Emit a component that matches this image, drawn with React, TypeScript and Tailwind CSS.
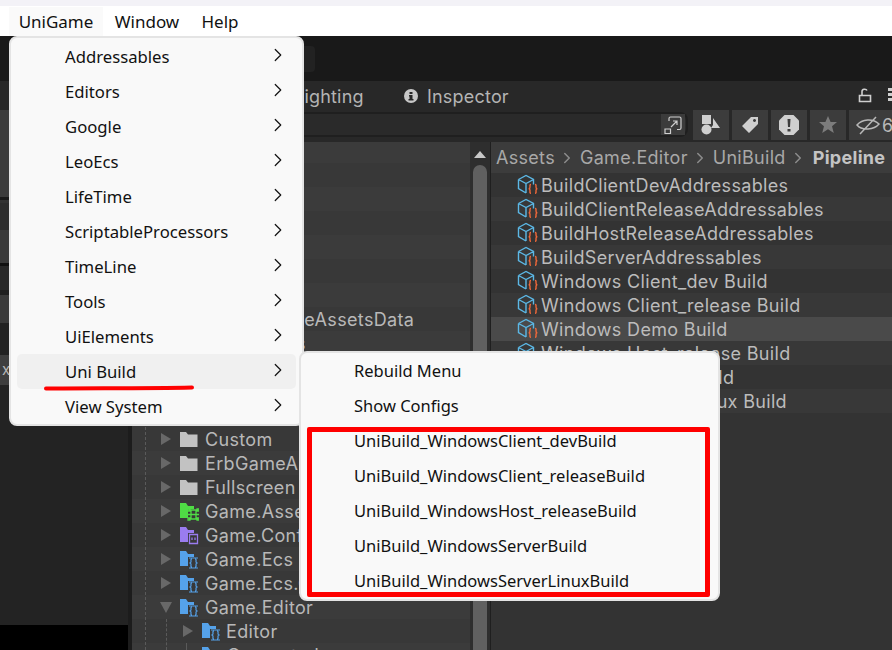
import { ChevronRight } from "lucide-react";

const treeTop = ["", "", "Animations", "", "", "", "", "AddressableAssetsData", "Assemblies", "", "", ""];

const treeRows = [
  { name: "Custom", icon: "plain" },
  { name: "ErbGameArt", icon: "plain" },
  { name: "Fullscreen", icon: "plain" },
  { name: "Game.Assets", icon: "green" },
  { name: "Game.Configuration", icon: "purple" },
  { name: "Game.Ecs", icon: "blue" },
  { name: "Game.Ecs.Client", icon: "blue" },
  { name: "Game.Editor", icon: "blue", open: true },
];

const assets = [
  "BuildClientDevAddressables",
  "BuildClientReleaseAddressables",
  "BuildHostReleaseAddressables",
  "BuildServerAddressables",
  "Windows Client_dev Build",
  "Windows Client_release Build",
  "Windows Demo Build",
  "Windows Host_release Build",
  "Windows Server Build",
  "Windows Server Linux Build",
];

const mainMenu = [
  "Addressables",
  "Editors",
  "Google",
  "LeoEcs",
  "LifeTime",
  "ScriptableProcessors",
  "TimeLine",
  "Tools",
  "UiElements",
  "Uni Build",
  "View System",
];

const subMenu = [
  "Rebuild Menu",
  "Show Configs",
  "UniBuild_WindowsClient_devBuild",
  "UniBuild_WindowsClient_releaseBuild",
  "UniBuild_WindowsHost_releaseBuild",
  "UniBuild_WindowsServerBuild",
  "UniBuild_WindowsServerLinuxBuild",
];

const leftStrips = [
  "h-[29px] bg-[#272727]",
  "h-[87px] bg-[#3b3b3b]",
  "h-[3px] bg-[#191919]",
  "h-[3px] bg-[#333333]",
  "h-[27px] bg-[#2d2d2d]",
  "h-[33px] bg-[#3a3a3a]",
  "h-[3px] bg-[#111111]",
  "h-[24px] bg-[#282828]",
  "h-[5px] bg-[#1f1f1f]",
  "h-[28px] bg-[#3a3a3a]",
  "h-[32px] bg-[#222222]",
];

function CubeIcon() {
  return (
    <svg width="24" height="24" viewBox="0 0 24 24" fill="none" className="shrink-0">
      <path
        d="M2.500 6.500 10 2.500l7.500 4v5M2.500 6.500v9L10 20M2.500 6.500 10 10.500l7.500-4M10 10.500V20"
        stroke="#5cb8e6"
        strokeWidth="1.400"
      />
      <path
        d="M15 11.500c-1.400 0-1 1.200-1 2.500 0 1.200-.4 1.600-1.200 1.800.8.2 1.200.6 1.200 1.800 0 1.300-.4 2.600 1 2.600M19 11.500c1.400 0 1 1.200 1 2.500 0 1.200.4 1.600 1.200 1.800-.8.2-1.200.6-1.200 1.800 0 1.300.4 2.600-1 2.600"
        stroke="#f0683a"
        strokeWidth="1.400"
      />
    </svg>
  );
}

function FolderIcon({ kind }: { kind: string }) {
  const fill =
    kind === "green" ? "#4fdc45" : kind === "purple" ? "#9a7cf0" : kind === "blue" ? "#55a2ea" : "#c2c2c2";
  return (
    <svg width="20" height="20" viewBox="0 0 20 20" className="shrink-0">
      {kind === "plain" ? (
        <path d="M1 3h6l2 2.500h9.500V18H1z" fill={fill} />
      ) : (
        <>
          <path d="M1 2h6l2 3h6v12H1z" fill={fill} />
          <rect x="9" y="8" width="11" height="12" fill="#383838" />
          {kind === "blue" && (
            <path
              d="M13 10c-1.500 0-1 1.400-1 2.700 0 .8-.4 1-1 1.300.6.300 1 .5 1 1.300 0 1.300-.5 2.700 1 2.700M16 10c1.500 0 1 1.400 1 2.700 0 .8.4 1 1 1.300-.6.300-1 .5-1 1.300 0 1.300.5 2.700-1 2.700M10 9h9M10 19h9"
              stroke={fill}
              strokeWidth="1.200"
              fill="none"
            />
          )}
          {kind === "green" && (
            <path d="M10 9h9M10 18h9M12 9v9M17 9v9M9 13.500h11M9 8h2v2H9zM18 8h2v2h-2zM9 17h2v2H9zM18 17h2v2h-2z" stroke={fill} strokeWidth="1.300" fill="none" />
          )}
          {kind === "purple" && (
            <path d="M10.500 9.500h8v9h-8zM13 12.500V15M16 12.500V15" stroke={fill} strokeWidth="1.300" fill="none" />
          )}
        </>
      )}
    </svg>
  );
}

function Arrow({ open }: { open?: boolean }) {
  return (
    <svg width="12" height="14" viewBox="0 0 12 14" className="shrink-0">
      {open ? <path d="M0 2h12L6 13z" fill="#686868" /> : <path d="M1 1l10 6-10 6z" fill="#686868" />}
    </svg>
  );
}

function ToolButton({ children, wide }: { children: React.ReactNode; wide?: boolean }) {
  return (
    <div className={`flex h-[30px] items-center bg-[#3c3c3c] ${wide ? "w-[43px] justify-start pl-[7px]" : "w-[36px] justify-center"}`}>
      {children}
    </div>
  );
}

function EditorBackdrop() {
  return (
    <div className="flex h-[614px] flex-col overflow-hidden bg-[#1c1c1c]">
      <div className="flex h-[45px] shrink-0 items-center bg-[#191919] pl-[290px]">
        <div className="h-[26px] w-[25px] rounded-sm bg-[#222222]" />
      </div>

      <div className="flex min-h-0 flex-1">
        <div className="flex w-[132px] shrink-0 flex-col">
          {leftStrips.map((strip, i) => (
            <div key={i} className={strip} />
          ))}
          <div className="flex h-[30px] items-center bg-[#3e3e3e] pl-[2px] text-[15px] text-[#b8b8b8]">x</div>
          <div className="h-[240px] w-[128px] bg-[#232323]" />
          <div className="h-[25px] w-[128px] bg-black" />
        </div>

        <div className="flex min-w-0 flex-1 flex-col">
          <div className="flex h-[29px] shrink-0 items-center bg-[#282828] pl-[162px] pt-[2px] text-[18px] tracking-[0.2px] text-[#b4b4b4]">
            <span className="w-[110px]">Lighting</span>
            <svg width="14" height="14" viewBox="0 0 14 14" className="mr-[9px] -mt-[1px]">
              <circle cx="7" cy="7" r="7" fill="#c8c8c8" />
              <path d="M5.500 3h3v2h-3zM5 6h3.500v4h1v1.500h-5V10h1V7.500H5z" fill="#282828" />
            </svg>
            <span>Inspector</span>
            <svg width="14" height="16" viewBox="0 0 14 16" className="ml-auto mr-[16px] -mt-[4px]">
              <path d="M1.500 8.500h11v6h-11zM4 8V4.500C4 2 8 1.500 9 3.500" stroke="#cfcfcf" strokeWidth="1.600" fill="none" />
            </svg>
            <div className="-mr-[1px] -mt-[4px] flex w-[5px] flex-col gap-[2px]">
              <div className="h-[3px] bg-[#cfcfcf]" />
              <div className="h-[3px] bg-[#cfcfcf]" />
              <div className="h-[3px] bg-[#cfcfcf]" />
            </div>
          </div>

          <div className="flex h-[32px] shrink-0 items-start bg-[#282828]">
            <div className="mt-[2px] flex h-[25px] w-[556px] items-center justify-end rounded-r-lg border-y-2 border-r-2 border-y-[#1f1f1f] border-r-[#1f1f1f] bg-[#2a2a2a] pr-px">
              <div className="flex h-[21px] w-[24px] items-center justify-center bg-[#3b3b3b]">
                <svg width="20" height="20" viewBox="0 0 20 20" fill="none" stroke="#cfcfcf" strokeWidth="1.200">
                  <path d="M6 6V3.500A1.500 1.500 0 0 1 7.500 2h9A1.500 1.500 0 0 1 18 3.500V13a1.500 1.500 0 0 1-1.500 1.500H14" />
                  <path d="M2 14h5.500v4.500H2zM8 12l6-6M10 6h4v4" />
                </svg>
              </div>
            </div>
            <div className="ml-[5px] flex gap-[3px]">
              <ToolButton>
                <svg width="20" height="20" viewBox="0 0 20 20" fill="#cfcfcf">
                  <rect x="1" y="0" width="9" height="9" />
                  <circle cx="5.500" cy="14.500" r="5" />
                  <path d="M12 3l7 10h-9l2-3z" />
                </svg>
              </ToolButton>
              <ToolButton>
                <svg width="18" height="18" viewBox="0 0 18 18" fill="#cfcfcf">
                  <path fillRule="evenodd" d="M10 1h7v7l-9 9-7-7zM13.500 3a1.500 1.500 0 1 0 .01 0z" />
                </svg>
              </ToolButton>
              <ToolButton>
                <svg width="22" height="22" viewBox="0 0 22 22">
                  <path d="M6.500 1h9L21 6.500v9L15.500 21h-9L1 15.500v-9z" fill="#cfcfcf" />
                  <path d="M9.500 5h3l-.5 8h-2zM9.500 15h3v2.500h-3z" fill="#3c3c3c" />
                </svg>
              </ToolButton>
              <ToolButton>
                <svg width="18" height="18" viewBox="0 0 18 18" fill="#7c7c7c">
                  <path d="M9 0l2.600 6h6.400l-5 4.200L14.800 17 9 13.200 3.200 17 5 10.200 0 6h6.400z" />
                </svg>
              </ToolButton>
              <ToolButton wide>
                <svg width="24" height="20" viewBox="0 0 24 20" fill="none" stroke="#b8b8b8" strokeWidth="1.500" className="shrink-0">
                  <path d="M1 10c5-6 16-7 22-1-5 6-17 7-22 1zM4 19 20 2" />
                </svg>
                <span className="pl-[2px] text-[18px] text-[#b8b8b8]">6</span>
              </ToolButton>
            </div>
          </div>

          <div className="flex min-h-0 flex-1 bg-[#1f1f1f]">
            <div className="relative w-[338px] shrink-0 bg-[#383838]">
              {treeTop.map((name, i) => (
                <div
                  key={i}
                  className={`flex items-center pl-[73px] text-[18px] tracking-[0.34px] text-[#b8b8b8] ${i === 0 ? "h-[21px]" : "h-[24px]"} ${i % 2 ? "bg-[#383838]" : "bg-[#3b3b3b]"}`}
                >
                  {name}
                </div>
              ))}
              {treeRows.map((row, i) => (
                <div
                  key={row.name}
                  className={`flex h-[24px] items-center whitespace-nowrap pl-[28px] text-[18px] tracking-[0.34px] text-[#b8b8b8] ${i % 2 ? "bg-[#3b3b3b]" : "bg-[#383838]"}`}
                >
                  <Arrow open={row.open} />
                  <span className="ml-[7px] mr-[6px] flex"><FolderIcon kind={row.icon} /></span>
                  {row.name}
                </div>
              ))}
              <div className="flex h-[24px] items-center whitespace-nowrap bg-[#383838] pl-[50px] text-[18px] tracking-[0.34px] text-[#b8b8b8]">
                <Arrow />
                <span className="ml-[7px] mr-[5px] flex"><FolderIcon kind="blue" /></span>
                Editor
              </div>
              <div className="flex h-[24px] items-center whitespace-nowrap bg-[#3b3b3b] pl-[69px] text-[18px] tracking-[0.34px] text-[#b8b8b8]">
                <span className="mr-[6px] flex"><FolderIcon kind="blue" /></span>
                Generated
              </div>
              <div className="absolute bottom-0 left-[13px] top-[285px] border-l border-dashed border-[#5a5a5a]" />
              <div className="absolute bottom-0 left-[34px] top-[477px] border-l border-dashed border-[#5a5a5a]" />
              <div className="absolute bottom-0 left-[54px] top-[501px] border-l border-[#5a5a5a]" />
            </div>

            <div className="flex w-[20px] shrink-0 flex-col items-center bg-[#2e2e2e] pt-[9px]">
              <div className="h-0 w-0 border-x-[6px] border-b-[7px] border-x-transparent border-b-[#c8c8c8]" />
              <div className="mt-[7px] w-[14px] flex-1 rounded-t-[7px] bg-[#606060]" />
            </div>

            <div className="ml-px flex min-w-0 flex-1 flex-col bg-[#333333]">
              <div className="flex h-[31px] shrink-0 items-center whitespace-nowrap bg-[#3c3c3c] pl-[5px] text-[18px] tracking-[0.3px] text-[#a8a8a8]">
                <span>Assets</span>
                <ChevronRight size={18} strokeWidth={2} className="mx-[3.500px] text-[#8c8c8c]" />
                <span>Game.Editor</span>
                <ChevronRight size={18} strokeWidth={2} className="mx-[3.500px] text-[#8c8c8c]" />
                <span>UniBuild</span>
                <ChevronRight size={18} strokeWidth={2} className="mx-[3.500px] text-[#8c8c8c]" />
                <span className="ml-[2px] font-bold text-[#c4c4c4]">Pipeline</span>
              </div>
              {assets.map((name, i) => (
                <div
                  key={name}
                  className={`flex h-[24px] shrink-0 items-center whitespace-nowrap pl-[25px] text-[18px] tracking-[0.32px] text-[#bcbcbc] ${
                    name === "Windows Demo Build" ? "bg-[#4a4a4a]" : i % 2 ? "bg-[#383838]" : "bg-[#333333]"
                  }`}
                >
                  <CubeIcon />
                  <span className="ml-px">{name}</span>
                </div>
              ))}
            </div>
          </div>
        </div>
      </div>
    </div>
  );
}

export default function App() {
  return (
    <div className="relative h-[650px] w-[892px] overflow-hidden bg-white font-['Noto_Sans','Inter',sans-serif]">
      <div className="h-[6px] bg-[#f3f2f7]" />
      <div className="flex h-[30px] items-stretch bg-white pl-[9px] pt-px text-[17px] text-[#111111]">
        <div className="flex w-[94px] items-center justify-center bg-[#fafafa]">UniGame</div>
        <div className="flex w-[88px] items-center justify-center">Window</div>
        <div className="flex w-[58px] items-center justify-center">Help</div>
      </div>
      <div className="font-['Inter',sans-serif]">
        <EditorBackdrop />
      </div>

      <div className="absolute left-[9px] top-[36px] flex h-[390px] w-[295px] flex-col rounded-lg border-2 border-[#e4e4e4] bg-[#f9f9f9] py-px pl-[6px] pr-[6px] text-[16.7px] text-[#111111]">
        {mainMenu.map((item) => (
          <div
            key={item}
            className={`flex h-[35px] shrink-0 items-center justify-between rounded-[5px] pl-[48px] pr-[7px] ${item === "Uni Build" ? "bg-[#f0f0f0]" : ""}`}
          >
            <span>{item}</span>
            <ChevronRight size={22} strokeWidth={1.300} className="-mt-[3px]" />
          </div>
        ))}
      </div>

      <svg width="150" height="6" viewBox="0 0 150 6" className="absolute left-[44px] top-[385px]">
        <path d="M2 3.500C50 3 100 3.500 148 2.500" stroke="#ff0000" strokeWidth="4" strokeLinecap="round" fill="none" />
      </svg>

      <div className="absolute left-[299px] top-[351px] flex h-[250px] w-[421px] flex-col rounded-lg border-2 border-[#e4e4e4] bg-[#f9f9f9] pl-[53px] pt-px text-[16.5px] text-[#111111]">
        {subMenu.map((item) => (
          <div key={item} className="flex h-[35px] shrink-0 items-center">
            {item}
          </div>
        ))}
      </div>

      <div className="absolute left-[307px] top-[427px] h-[170px] w-[403px] rounded-[2px] border-[5px] border-[#ff0000]" />
    </div>
  );
}
